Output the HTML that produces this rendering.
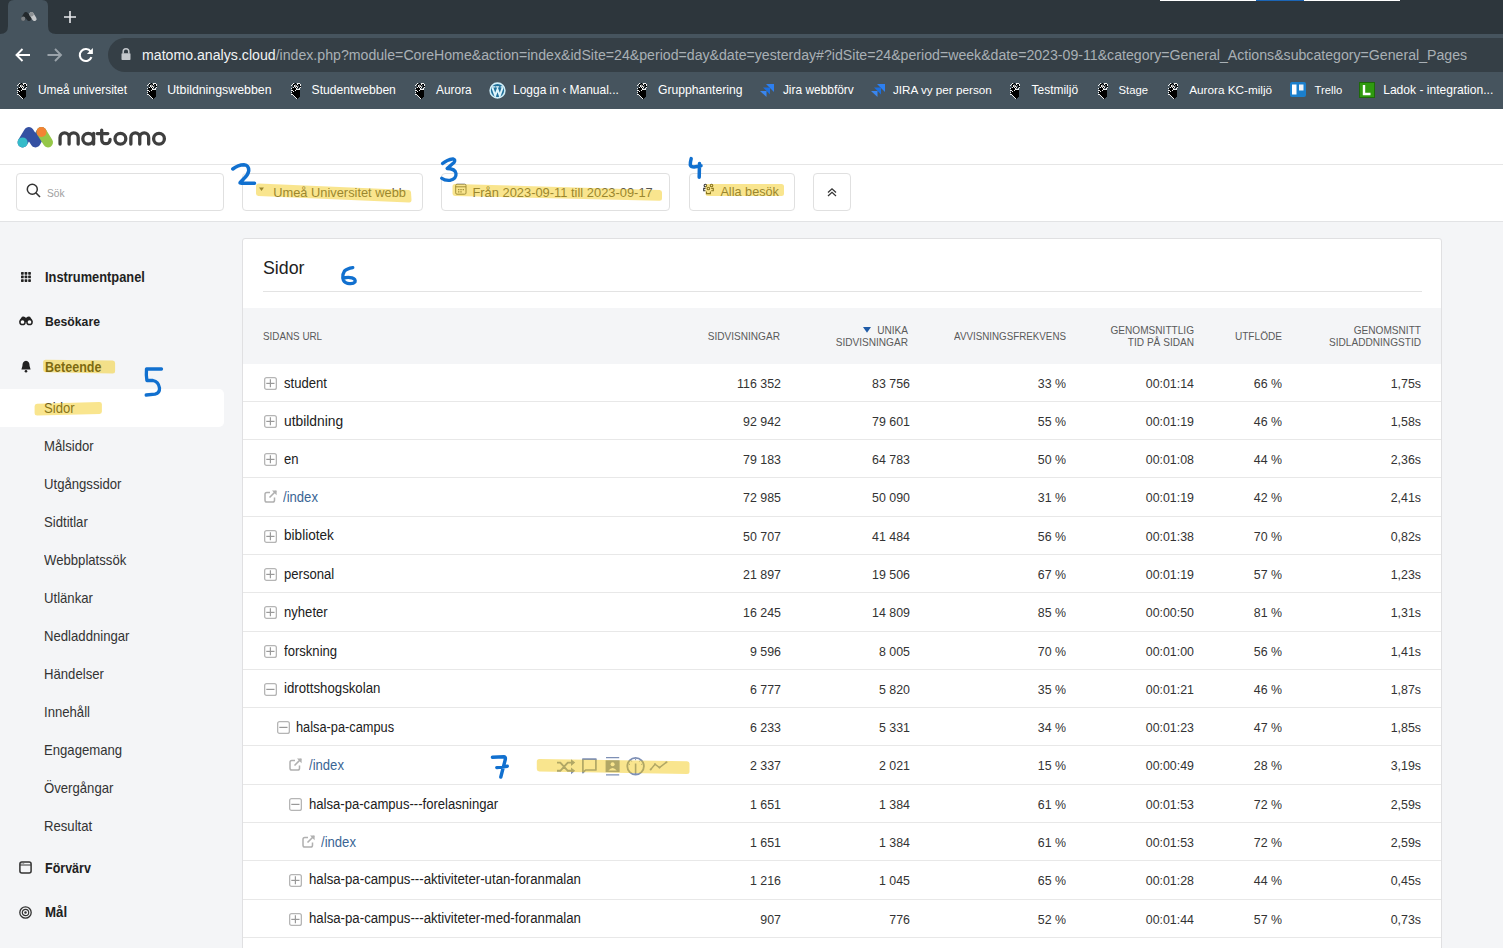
<!DOCTYPE html><html><head><meta charset="utf-8"><style>
html,body{margin:0;padding:0;width:1503px;height:948px;overflow:hidden;background:#f4f5f7;}
body{position:relative;font-family:"Liberation Sans",sans-serif;}
.t{position:absolute;white-space:nowrap;}
.r{position:absolute;}
svg{position:absolute;overflow:visible;}
</style></head><body>

<div class="r" style="left:0px;top:0px;width:1503px;height:34px;background:#2d363c;"></div>
<div class="r" style="left:0px;top:34px;width:1503px;height:75px;background:#46545e;"></div>
<svg style="left:0;top:0" width="60" height="34"><path d="M0 34 Q8 34 8 26 L8 6 Q8 0 14 0 L42 0 Q48 0 48 6 L48 26 Q48 34 56 34 Z" fill="#46545e"/></svg>
<svg style="left:0;top:0" width="60" height="30"><path d="M23.2 18.8 L25.9 14.2 L28.9 18.8 L31.5 14.2" stroke="#23292d" stroke-width="4.4" fill="none" stroke-linecap="round" stroke-linejoin="round"/><path d="M31.5 14.2 L34.4 18.8" stroke="#c6c9cb" stroke-width="4.4" stroke-linecap="round"/><circle cx="23.2" cy="18.8" r="2.2" fill="#7b8084"/><circle cx="31.5" cy="14.2" r="2.2" fill="#8d9295"/></svg>
<svg style="left:63px;top:10px" width="14" height="14"><path d="M7 1 V13 M1 7 H13" stroke="#e8eaed" stroke-width="1.6"/></svg>
<div class="r" style="left:1160px;top:0px;width:240px;height:1px;background:#ffffff;"></div>
<div class="r" style="left:1256px;top:0px;width:48px;height:1px;background:#1b65b5;"></div>
<svg style="left:14px;top:47px" width="18" height="16"><path d="M16 8 H2.5 M8.5 2 L2.5 8 L8.5 14" stroke="#ffffff" stroke-width="1.9" fill="none"/></svg>
<svg style="left:46px;top:47px" width="18" height="16"><path d="M1.5 8 H15 M9 2 L15 8 L9 14" stroke="#9aa3aa" stroke-width="1.9" fill="none"/></svg>
<svg style="left:0;top:0" width="110" height="80"><path d="M90.7 51.56 A6 6 0 1 0 91.44 57.05" stroke="#ffffff" stroke-width="2.1" fill="none"/><path d="M92.9 48 L92.9 54 L86.9 54 Z" fill="#ffffff"/></svg>
<div class="r" style="left:108px;top:38px;width:1420px;height:34px;background:#353f46;border-radius:17px;"></div>
<svg style="left:121px;top:48px" width="10" height="13"><path d="M2.2 5.5 V3.6 A2.8 2.8 0 0 1 7.8 3.6 V5.5" stroke="#c4c8cc" stroke-width="1.5" fill="none"/><rect x="0.5" y="5.3" width="9" height="6.8" rx="0.8" fill="#c4c8cc"/></svg>
<div class="t " style="top:46.81px;font-size:14.15px;line-height:16.98px;color:#f1f3f4;left:142px;">matomo.analys.cloud<span style="color:#a9b0b5">/index.php?module=CoreHome&amp;action=index&amp;idSite=24&amp;period=day&amp;date=yesterday#?idSite=24&amp;period=week&amp;date=2023-09-11&amp;category=General_Actions&amp;subcategory=General_Pages</span></div>
<svg width="0" height="0" style="position:absolute"><defs><symbol id="umu" viewBox="0 0 11 16"><rect x="2" y="0" width="1" height="1" fill="#f0f0f0"/><rect x="4" y="0" width="1" height="1" fill="#000"/><rect x="6" y="0" width="1" height="1" fill="#f0f0f0"/><rect x="7" y="0" width="1" height="1" fill="#f0f0f0"/><rect x="8" y="0" width="1" height="1" fill="#f0f0f0"/><rect x="1" y="1" width="1" height="1" fill="#f0f0f0"/><rect x="2" y="1" width="1" height="1" fill="#000"/><rect x="3" y="1" width="1" height="1" fill="#000"/><rect x="5" y="1" width="1" height="1" fill="#000"/><rect x="6" y="1" width="1" height="1" fill="#f0f0f0"/><rect x="7" y="1" width="1" height="1" fill="#000"/><rect x="8" y="1" width="1" height="1" fill="#000"/><rect x="9" y="1" width="1" height="1" fill="#f0f0f0"/><rect x="0" y="2" width="1" height="1" fill="#f0f0f0"/><rect x="2" y="2" width="1" height="1" fill="#000"/><rect x="3" y="2" width="1" height="1" fill="#f0f0f0"/><rect x="4" y="2" width="1" height="1" fill="#8c8c8c"/><rect x="5" y="2" width="1" height="1" fill="#8c8c8c"/><rect x="6" y="2" width="1" height="1" fill="#000"/><rect x="8" y="2" width="1" height="1" fill="#000"/><rect x="9" y="2" width="1" height="1" fill="#f0f0f0"/><rect x="2" y="3" width="1" height="1" fill="#000"/><rect x="3" y="3" width="1" height="1" fill="#f0f0f0"/><rect x="4" y="3" width="1" height="1" fill="#8c8c8c"/><rect x="5" y="3" width="1" height="1" fill="#f0f0f0"/><rect x="6" y="3" width="1" height="1" fill="#8c8c8c"/><rect x="8" y="3" width="1" height="1" fill="#000"/><rect x="9" y="3" width="1" height="1" fill="#000"/><rect x="2" y="4" width="1" height="1" fill="#f0f0f0"/><rect x="3" y="4" width="1" height="1" fill="#000"/><rect x="4" y="4" width="1" height="1" fill="#f0f0f0"/><rect x="5" y="4" width="1" height="1" fill="#000"/><rect x="6" y="4" width="1" height="1" fill="#f0f0f0"/><rect x="7" y="4" width="1" height="1" fill="#000"/><rect x="9" y="4" width="1" height="1" fill="#f0f0f0"/><rect x="0" y="5" width="1" height="1" fill="#f0f0f0"/><rect x="1" y="5" width="1" height="1" fill="#000"/><rect x="2" y="5" width="1" height="1" fill="#000"/><rect x="3" y="5" width="1" height="1" fill="#000"/><rect x="4" y="5" width="1" height="1" fill="#000"/><rect x="5" y="5" width="1" height="1" fill="#f0f0f0"/><rect x="8" y="5" width="1" height="1" fill="#f0f0f0"/><rect x="1" y="6" width="1" height="1" fill="#000"/><rect x="2" y="6" width="1" height="1" fill="#000"/><rect x="3" y="6" width="1" height="1" fill="#000"/><rect x="4" y="6" width="1" height="1" fill="#000"/><rect x="5" y="6" width="1" height="1" fill="#f0f0f0"/><rect x="6" y="6" width="1" height="1" fill="#f0f0f0"/><rect x="7" y="6" width="1" height="1" fill="#f0f0f0"/><rect x="8" y="6" width="1" height="1" fill="#f0f0f0"/><rect x="0" y="7" width="1" height="1" fill="#f0f0f0"/><rect x="1" y="7" width="1" height="1" fill="#f0f0f0"/><rect x="2" y="7" width="1" height="1" fill="#000"/><rect x="3" y="7" width="1" height="1" fill="#000"/><rect x="4" y="7" width="1" height="1" fill="#f0f0f0"/><rect x="5" y="7" width="1" height="1" fill="#000"/><rect x="6" y="7" width="1" height="1" fill="#000"/><rect x="7" y="7" width="1" height="1" fill="#000"/><rect x="8" y="7" width="1" height="1" fill="#000"/><rect x="1" y="8" width="1" height="1" fill="#000"/><rect x="2" y="8" width="1" height="1" fill="#f0f0f0"/><rect x="3" y="8" width="1" height="1" fill="#000"/><rect x="4" y="8" width="1" height="1" fill="#000"/><rect x="5" y="8" width="1" height="1" fill="#000"/><rect x="6" y="8" width="1" height="1" fill="#000"/><rect x="7" y="8" width="1" height="1" fill="#000"/><rect x="8" y="8" width="1" height="1" fill="#000"/><rect x="0" y="9" width="1" height="1" fill="#f0f0f0"/><rect x="1" y="9" width="1" height="1" fill="#000"/><rect x="2" y="9" width="1" height="1" fill="#000"/><rect x="3" y="9" width="1" height="1" fill="#000"/><rect x="4" y="9" width="1" height="1" fill="#000"/><rect x="5" y="9" width="1" height="1" fill="#000"/><rect x="6" y="9" width="1" height="1" fill="#000"/><rect x="7" y="9" width="1" height="1" fill="#000"/><rect x="8" y="9" width="1" height="1" fill="#000"/><rect x="1" y="10" width="1" height="1" fill="#000"/><rect x="2" y="10" width="1" height="1" fill="#000"/><rect x="3" y="10" width="1" height="1" fill="#000"/><rect x="4" y="10" width="1" height="1" fill="#000"/><rect x="5" y="10" width="1" height="1" fill="#000"/><rect x="6" y="10" width="1" height="1" fill="#000"/><rect x="7" y="10" width="1" height="1" fill="#000"/><rect x="8" y="10" width="1" height="1" fill="#000"/><rect x="0" y="11" width="1" height="1" fill="#f0f0f0"/><rect x="1" y="11" width="1" height="1" fill="#f0f0f0"/><rect x="2" y="11" width="1" height="1" fill="#000"/><rect x="3" y="11" width="1" height="1" fill="#000"/><rect x="4" y="11" width="1" height="1" fill="#000"/><rect x="5" y="11" width="1" height="1" fill="#000"/><rect x="6" y="11" width="1" height="1" fill="#000"/><rect x="7" y="11" width="1" height="1" fill="#000"/><rect x="8" y="11" width="1" height="1" fill="#000"/><rect x="2" y="12" width="1" height="1" fill="#f0f0f0"/><rect x="3" y="12" width="1" height="1" fill="#000"/><rect x="4" y="12" width="1" height="1" fill="#000"/><rect x="5" y="12" width="1" height="1" fill="#000"/><rect x="6" y="12" width="1" height="1" fill="#000"/><rect x="7" y="12" width="1" height="1" fill="#000"/><rect x="8" y="12" width="1" height="1" fill="#000"/><rect x="3" y="13" width="1" height="1" fill="#f0f0f0"/><rect x="4" y="13" width="1" height="1" fill="#000"/><rect x="5" y="13" width="1" height="1" fill="#000"/><rect x="6" y="13" width="1" height="1" fill="#000"/><rect x="7" y="13" width="1" height="1" fill="#000"/><rect x="8" y="13" width="1" height="1" fill="#000"/><rect x="4" y="14" width="1" height="1" fill="#f0f0f0"/><rect x="5" y="14" width="1" height="1" fill="#000"/><rect x="6" y="14" width="1" height="1" fill="#000"/><rect x="7" y="14" width="1" height="1" fill="#000"/><rect x="5" y="15" width="1" height="1" fill="#f0f0f0"/><rect x="6" y="15" width="1" height="1" fill="#000"/></symbol></defs></svg>
<svg style="left:17px;top:83px" width="11" height="16" shape-rendering="crispEdges"><use href="#umu"/></svg>
<div class="t " style="top:82.97px;font-size:11.87px;line-height:14.24px;color:#ffffff;left:38.0px;">Umeå universitet</div>
<svg style="left:147px;top:83px" width="11" height="16" shape-rendering="crispEdges"><use href="#umu"/></svg>
<div class="t " style="top:82.51px;font-size:12.35px;line-height:14.82px;color:#ffffff;left:167.2px;">Utbildningswebben</div>
<svg style="left:291px;top:83px" width="11" height="16" shape-rendering="crispEdges"><use href="#umu"/></svg>
<div class="t " style="top:82.71px;font-size:12.14px;line-height:14.57px;color:#ffffff;left:311.6px;">Studentwebben</div>
<svg style="left:415px;top:83px" width="11" height="16" shape-rendering="crispEdges"><use href="#umu"/></svg>
<div class="t " style="top:82.97px;font-size:11.87px;line-height:14.24px;color:#ffffff;left:436.1px;">Aurora</div>
<svg style="left:489px;top:81.8px" width="17" height="17" viewBox="0 0 17 17"><circle cx="8.5" cy="8.5" r="7.4" fill="#1f6f99" stroke="#cfeef9" stroke-width="1.6"/><path d="M3.3 5.4 L6.2 13.6 L8.5 7.3 L10.8 13.6 L13.7 5.4" stroke="#dff5fc" stroke-width="1.9" fill="none"/><path d="M2.6 4.9 H6.3 M6.8 4.9 H10.2 M11.6 4.9 H14.4" stroke="#dff5fc" stroke-width="1.1"/></svg>
<div class="t " style="top:82.86px;font-size:11.98px;line-height:14.38px;color:#ffffff;left:513.0px;">Logga in ‹ Manual...</div>
<svg style="left:637px;top:83px" width="11" height="16" shape-rendering="crispEdges"><use href="#umu"/></svg>
<div class="t " style="top:82.70px;font-size:12.15px;line-height:14.58px;color:#ffffff;left:658.1px;">Grupphantering</div>
<svg style="left:759px;top:82px" width="16" height="16" viewBox="0 0 16 16"><path d="M7 2 H15 V10 Z" fill="#2d7ff0"/><path d="M4 5.5 L11 5.5 L11 12.5 Z" fill="#1c6fe0"/><path d="M1 9 L7.5 9 L7.5 15 Z" fill="#3a86ee"/></svg>
<div class="t " style="top:82.91px;font-size:11.93px;line-height:14.32px;color:#ffffff;left:782.9px;">Jira webbförv</div>
<svg style="left:870px;top:82px" width="16" height="16" viewBox="0 0 16 16"><path d="M7 2 H15 V10 Z" fill="#2d7ff0"/><path d="M4 5.5 L11 5.5 L11 12.5 Z" fill="#1c6fe0"/><path d="M1 9 L7.5 9 L7.5 15 Z" fill="#3a86ee"/></svg>
<div class="t " style="top:83.13px;font-size:11.69px;line-height:14.03px;color:#ffffff;left:893.0px;">JIRA vy per person</div>
<svg style="left:1010px;top:83px" width="11" height="16" shape-rendering="crispEdges"><use href="#umu"/></svg>
<div class="t " style="top:82.85px;font-size:11.99px;line-height:14.39px;color:#ffffff;left:1031.5px;">Testmiljö</div>
<svg style="left:1098px;top:83px" width="11" height="16" shape-rendering="crispEdges"><use href="#umu"/></svg>
<div class="t " style="top:83.50px;font-size:11.30px;line-height:13.56px;color:#ffffff;left:1118.5px;">Stage</div>
<svg style="left:1168px;top:83px" width="11" height="16" shape-rendering="crispEdges"><use href="#umu"/></svg>
<div class="t " style="top:83.07px;font-size:11.76px;line-height:14.11px;color:#ffffff;left:1189.2px;">Aurora KC-miljö</div>
<svg style="left:1290px;top:82px" width="16" height="15" viewBox="0 0 16 15"><rect x="0" y="0" width="16" height="15" rx="2" fill="#1b7fcc"/><rect x="2" y="2.5" width="4.5" height="10" fill="#fff"/><rect x="9" y="2.5" width="4.5" height="6" fill="#f0f4f8"/></svg>
<div class="t " style="top:83.52px;font-size:11.28px;line-height:13.54px;color:#ffffff;left:1314.5px;">Trello</div>
<svg style="left:1359px;top:82px" width="16" height="16" viewBox="0 0 16 16"><rect x="0.5" y="0.5" width="15" height="15" fill="#2f9a10" stroke="#1d6a0a"/><path d="M5 3 V12 H11.5" stroke="#fff" stroke-width="2.4" fill="none"/></svg>
<div class="t " style="top:82.76px;font-size:12.09px;line-height:14.51px;color:#ffffff;left:1383.2px;">Ladok - integration...</div>
<div class="r" style="left:0px;top:109px;width:1503px;height:56px;background:#ffffff;"></div>
<div class="r" style="left:0px;top:164px;width:1503px;height:1px;background:#e6e6e6;"></div>
<div class="r" style="left:0px;top:165px;width:1503px;height:56px;background:#ffffff;"></div>
<div class="r" style="left:0px;top:221px;width:1503px;height:1px;background:#e2e3e5;"></div>
<svg style="left:0;top:0" width="200" height="160"><path d="M22.6 142.4 L28.8 132 L35.6 142.4 L41.5 132" stroke="#3450a2" stroke-width="10" fill="none" stroke-linecap="round" stroke-linejoin="round"/><path d="M41.5 132 L48 142.4" stroke="#95c748" stroke-width="10" stroke-linecap="round"/><circle cx="22.6" cy="142.4" r="5" fill="#35bbc9"/><circle cx="41.5" cy="132" r="5" fill="#f38334"/><g stroke="#3f3f3f" stroke-width="3.3" fill="none" stroke-linecap="round"><path d="M60.05 144 V137.4 A4.5 4.5 0 0 1 69.1 137.4 V144 M69.1 137.4 A4.55 4.55 0 0 1 78.2 137.4 V144"/><circle cx="88.2" cy="138.8" r="5.4"/><path d="M93.6 133.5 V144"/><path d="M101.7 130.2 V139.5 A4.2 4.2 0 0 0 110.1 139.5 M97.2 133.6 H107.8"/><circle cx="120.4" cy="138.8" r="5.4"/><path d="M130.85 144 V137.4 A4.45 4.45 0 0 1 139.75 137.4 V144 M139.75 137.4 A4.45 4.45 0 0 1 148.65 137.4 V144"/><circle cx="159" cy="138.8" r="5.4"/></g></svg>
<div class="r" style="left:16px;top:173px;width:208px;height:38px;background:#fff;box-sizing:border-box;border:1px solid #e0e0e0;border-radius:4px;"></div>
<div class="r" style="left:242px;top:173px;width:181px;height:38px;background:#fff;box-sizing:border-box;border:1px solid #e0e0e0;border-radius:4px;"></div>
<div class="r" style="left:441px;top:173px;width:229px;height:38px;background:#fff;box-sizing:border-box;border:1px solid #e0e0e0;border-radius:4px;"></div>
<div class="r" style="left:689px;top:173px;width:106px;height:38px;background:#fff;box-sizing:border-box;border:1px solid #e0e0e0;border-radius:4px;"></div>
<div class="r" style="left:813px;top:173px;width:38px;height:38px;background:#fff;box-sizing:border-box;border:1px solid #e0e0e0;border-radius:4px;"></div>
<svg style="left:26px;top:183px" width="16" height="16"><circle cx="6.3" cy="6.3" r="5" stroke="#333" stroke-width="1.5" fill="none"/><path d="M9.8 9.8 L14 14" stroke="#333" stroke-width="1.6"/></svg>
<div class="t " style="top:187.37px;font-size:11.02px;line-height:13.22px;color:#9e9e9e;left:47.4px;transform:scaleX(0.9259);transform-origin:0 0;">Sök</div>
<svg style="left:259px;top:187px" width="6" height="5"><path d="M0 0.5 H5 L2.5 4 Z" fill="#555"/></svg>
<div class="t " style="top:184.64px;font-size:12.85px;line-height:15.42px;color:#555;left:273.2px;">Umeå Universitet webb</div>
<svg style="left:455px;top:183px" width="12" height="12" viewBox="0 0 12 12"><rect x="0.7" y="1.2" width="10.3" height="10" rx="1.3" stroke="#666" stroke-width="1" fill="none"/><path d="M0.7 3.8 H11" stroke="#666" stroke-width="1"/><path d="M3 6h1.4v1.2H3z M5.3 6h1.4v1.2H5.3z M7.6 6h1.4v1.2H7.6z M3 8.3h1.4v1.2H3z M5.3 8.3h1.4v1.2H5.3z" fill="#666"/></svg>
<div class="t " style="top:184.79px;font-size:12.90px;line-height:15.48px;color:#555;left:472.4px;">Från 2023-09-11 till 2023-09-17</div>
<svg style="left:0;top:0" width="800" height="220"><g stroke="#3a3a3a" stroke-width="1.1" fill="none"><circle cx="705.4" cy="185.5" r="1.3"/><circle cx="711.5" cy="185.5" r="1.3"/><circle cx="708.4" cy="188.5" r="1.3"/><path d="M705.6 188.4 H703.7 V190.7 H705.6 M711.2 188.4 H713.3 V190.7 H711.2 M706.5 191.6 V193.6 H710.4 V191.6"/></g></svg>
<div class="t " style="top:184.68px;font-size:12.70px;line-height:15.24px;color:#555;left:720.4px;">Alla besök</div>
<svg style="left:826px;top:187px" width="12" height="10" viewBox="0 0 12 10"><path d="M2 5.5 L6 1.8 L10 5.5 M2 9 L6 5.3 L10 9" stroke="#333" stroke-width="1.25" fill="none"/></svg>
<div class="r" style="left:0px;top:389px;width:224px;height:38px;background:#ffffff;border-radius:0 5px 5px 0;"></div>
<div class="t " style="top:268.98px;font-size:14.39px;line-height:17.27px;color:#212121;font-weight:700;left:44.9px;transform:scaleX(0.8929);transform-origin:0 0;">Instrumentpanel</div>
<div class="t " style="top:314.27px;font-size:13.66px;line-height:16.4px;color:#212121;font-weight:700;left:44.9px;transform:scaleX(0.8929);transform-origin:0 0;">Besökare</div>
<div class="t " style="top:358.89px;font-size:14.06px;line-height:16.87px;color:#212121;font-weight:700;left:44.9px;transform:scaleX(0.8929);transform-origin:0 0;">Beteende</div>
<div class="t " style="top:860.05px;font-size:14.00px;line-height:16.8px;color:#212121;font-weight:700;left:45.1px;transform:scaleX(0.8929);transform-origin:0 0;">Förvärv</div>
<div class="t " style="top:904.00px;font-size:14.90px;line-height:17.88px;color:#212121;font-weight:700;left:45.1px;transform:scaleX(0.8929);transform-origin:0 0;">Mål</div>
<div class="t " style="top:399.56px;font-size:14.20px;line-height:17.04px;color:#333;left:44.4px;transform:scaleX(0.9259);transform-origin:0 0;">Sidor</div>
<div class="t " style="top:437.56px;font-size:14.20px;line-height:17.04px;color:#333;left:44.4px;transform:scaleX(0.9259);transform-origin:0 0;">Målsidor</div>
<div class="t " style="top:475.56px;font-size:14.20px;line-height:17.04px;color:#333;left:44.4px;transform:scaleX(0.9259);transform-origin:0 0;">Utgångssidor</div>
<div class="t " style="top:513.56px;font-size:14.20px;line-height:17.04px;color:#333;left:44.4px;transform:scaleX(0.9259);transform-origin:0 0;">Sidtitlar</div>
<div class="t " style="top:551.56px;font-size:14.20px;line-height:17.04px;color:#333;left:44.4px;transform:scaleX(0.9259);transform-origin:0 0;">Webbplatssök</div>
<div class="t " style="top:589.56px;font-size:14.20px;line-height:17.04px;color:#333;left:44.4px;transform:scaleX(0.9259);transform-origin:0 0;">Utlänkar</div>
<div class="t " style="top:627.56px;font-size:14.20px;line-height:17.04px;color:#333;left:44.4px;transform:scaleX(0.9259);transform-origin:0 0;">Nedladdningar</div>
<div class="t " style="top:665.56px;font-size:14.20px;line-height:17.04px;color:#333;left:44.4px;transform:scaleX(0.9259);transform-origin:0 0;">Händelser</div>
<div class="t " style="top:703.56px;font-size:14.20px;line-height:17.04px;color:#333;left:44.4px;transform:scaleX(0.9259);transform-origin:0 0;">Innehåll</div>
<div class="t " style="top:741.56px;font-size:14.20px;line-height:17.04px;color:#333;left:44.4px;transform:scaleX(0.9259);transform-origin:0 0;">Engagemang</div>
<div class="t " style="top:779.56px;font-size:14.20px;line-height:17.04px;color:#333;left:44.4px;transform:scaleX(0.9259);transform-origin:0 0;">Övergångar</div>
<div class="t " style="top:817.56px;font-size:14.20px;line-height:17.04px;color:#333;left:44.4px;transform:scaleX(0.9259);transform-origin:0 0;">Resultat</div>
<svg style="left:20.6px;top:271.5px" width="10" height="10" viewBox="0 0 10 10"><g fill="#222"><rect x="0" y="0" width="2.7" height="2.7" rx="0.6"/><rect x="3.6" y="0" width="2.7" height="2.7" rx="0.6"/><rect x="7.2" y="0" width="2.7" height="2.7" rx="0.6"/><rect x="0" y="3.6" width="2.7" height="2.7" rx="0.6"/><rect x="3.6" y="3.6" width="2.7" height="2.7" rx="0.6"/><rect x="7.2" y="3.6" width="2.7" height="2.7" rx="0.6"/><rect x="0" y="7.2" width="2.7" height="2.7" rx="0.6"/><rect x="3.6" y="7.2" width="2.7" height="2.7" rx="0.6"/><rect x="7.2" y="7.2" width="2.7" height="2.7" rx="0.6"/></g></svg>
<svg style="left:18.8px;top:316.4px" width="14" height="10" viewBox="0 0 14 10"><path d="M0.6 6 Q1.2 2.5 3 0.8 Q4.5 0 6 1 L7 2 L8 1 Q9.5 0 11 0.8 Q12.8 2.5 13.4 6 Z" fill="#222"/><circle cx="3.5" cy="6" r="2.6" fill="#fff" stroke="#222" stroke-width="1.5"/><circle cx="10.5" cy="6" r="2.6" fill="#fff" stroke="#222" stroke-width="1.5"/></svg>
<svg style="left:21px;top:360px" width="10" height="13" viewBox="0 0 10 13"><path d="M5 0.8 Q8.6 1.2 8.6 6 L9.6 9.5 H0.4 L1.4 6 Q1.4 1.2 5 0.8Z" fill="#222"/><circle cx="5" cy="11.3" r="1.3" fill="#222"/></svg>
<svg style="left:19px;top:861px" width="13" height="13" viewBox="0 0 13 13"><rect x="0.9" y="0.9" width="11.2" height="11.2" rx="2" stroke="#333" stroke-width="1.5" fill="none"/><path d="M1 4 H12" stroke="#333" stroke-width="1"/><path d="M2.5 2.2h1v0.8h-1z M4.2 2.2h1v0.8h-1z" fill="#666"/></svg>
<svg style="left:19px;top:906px" width="13" height="13" viewBox="0 0 13 13"><circle cx="6.5" cy="6.5" r="5.7" stroke="#333" stroke-width="1.3" fill="none"/><circle cx="6.5" cy="6.5" r="3.2" stroke="#333" stroke-width="1.2" fill="none"/><circle cx="6.5" cy="6.5" r="1.2" fill="#333"/></svg>
<div class="r" style="left:242px;top:238px;width:1200px;height:720px;background:#fff;box-sizing:border-box;border:1px solid #e0e0e2;border-radius:3px;"></div>
<div class="t " style="top:256.78px;font-size:18.51px;line-height:22.21px;color:#212121;left:262.7px;transform:scaleX(0.9615);transform-origin:0 0;">Sidor</div>
<div class="r" style="left:263px;top:291px;width:1159px;height:1px;background:#e3e3e3;"></div>
<div class="r" style="left:243px;top:308px;width:1198px;height:56px;background:#f4f5f7;"></div>
<div class="t " style="top:329.84px;font-size:10.74px;line-height:12.88px;color:#5a5a5a;left:263px;transform:scaleX(0.9174);transform-origin:0 0;">SIDANS URL</div>
<div class="t " style="top:329.58px;font-size:11.01px;line-height:13.21px;color:#5a5a5a;left:180.20000000000005px;width:600px;text-align:right;transform:scaleX(0.9174);transform-origin:100% 0;">SIDVISNINGAR</div>
<div class="t " style="top:323.58px;font-size:11.01px;line-height:13.21px;color:#5a5a5a;left:308px;width:600px;text-align:right;transform:scaleX(0.9174);transform-origin:100% 0;">UNIKA</div>
<div class="t " style="top:335.58px;font-size:11.01px;line-height:13.21px;color:#5a5a5a;left:308px;width:600px;text-align:right;transform:scaleX(0.9174);transform-origin:100% 0;">SIDVISNINGAR</div>
<svg style="left:863px;top:326.5px" width="9" height="6"><path d="M0 0 H8 L4 5.8 Z" fill="#1f5ba8"/></svg>
<div class="t " style="top:329.89px;font-size:10.68px;line-height:12.82px;color:#5a5a5a;left:466px;width:600px;text-align:right;transform:scaleX(0.9174);transform-origin:100% 0;">AVVISNINGSFREKVENS</div>
<div class="t " style="top:323.58px;font-size:11.01px;line-height:13.21px;color:#5a5a5a;left:594px;width:600px;text-align:right;transform:scaleX(0.9174);transform-origin:100% 0;">GENOMSNITTLIG</div>
<div class="t " style="top:335.58px;font-size:11.01px;line-height:13.21px;color:#5a5a5a;left:594px;width:600px;text-align:right;transform:scaleX(0.9174);transform-origin:100% 0;">TID PÅ SIDAN</div>
<div class="t " style="top:329.58px;font-size:11.01px;line-height:13.21px;color:#5a5a5a;left:682.2px;width:600px;text-align:right;transform:scaleX(0.9174);transform-origin:100% 0;">UTFLÖDE</div>
<div class="t " style="top:323.58px;font-size:11.01px;line-height:13.21px;color:#5a5a5a;left:820.5999999999999px;width:600px;text-align:right;transform:scaleX(0.9174);transform-origin:100% 0;">GENOMSNITT</div>
<div class="t " style="top:335.58px;font-size:11.01px;line-height:13.21px;color:#5a5a5a;left:820.5999999999999px;width:600px;text-align:right;transform:scaleX(0.9174);transform-origin:100% 0;">SIDLADDNINGSTID</div>
<div class="r" style="left:243px;top:401px;width:1198px;height:1px;background:#e8e8e8;"></div>
<svg style="left:264.0px;top:376.90px" width="13" height="13" viewBox="0 0 12 12"><rect x="0.6" y="0.6" width="10.8" height="10.8" rx="1.8" stroke="#b5b5b5" stroke-width="1.2" fill="none"/><path d="M2.1 5.9 H9.7" stroke="#999" stroke-width="1.1"/><path d="M5.9 2.1 V9.5" stroke="#999" stroke-width="1.1"/></svg>
<div class="t " style="top:374.51px;font-size:14.15px;line-height:16.98px;color:#212121;left:283.8px;transform:scaleX(0.9259);transform-origin:0 0;">student</div>
<div class="t " style="top:375.71px;font-size:12.77px;line-height:15.33px;color:#333;left:181.20000000000005px;width:600px;text-align:right;transform:scaleX(0.9709);transform-origin:100% 0;">116 352</div>
<div class="t " style="top:375.71px;font-size:12.77px;line-height:15.33px;color:#333;left:309.6px;width:600px;text-align:right;transform:scaleX(0.9709);transform-origin:100% 0;">83 756</div>
<div class="t " style="top:375.71px;font-size:12.77px;line-height:15.33px;color:#333;left:465.79999999999995px;width:600px;text-align:right;transform:scaleX(0.9709);transform-origin:100% 0;">33 %</div>
<div class="t " style="top:375.71px;font-size:12.77px;line-height:15.33px;color:#333;left:594px;width:600px;text-align:right;transform:scaleX(0.9709);transform-origin:100% 0;">00:01:14</div>
<div class="t " style="top:375.71px;font-size:12.77px;line-height:15.33px;color:#333;left:682.2px;width:600px;text-align:right;transform:scaleX(0.9709);transform-origin:100% 0;">66 %</div>
<div class="t " style="top:375.71px;font-size:12.77px;line-height:15.33px;color:#333;left:820.5999999999999px;width:600px;text-align:right;transform:scaleX(0.9709);transform-origin:100% 0;">1,75s</div>
<div class="r" style="left:243px;top:439px;width:1198px;height:1px;background:#e8e8e8;"></div>
<svg style="left:264.0px;top:414.90px" width="13" height="13" viewBox="0 0 12 12"><rect x="0.6" y="0.6" width="10.8" height="10.8" rx="1.8" stroke="#b5b5b5" stroke-width="1.2" fill="none"/><path d="M2.1 5.9 H9.7" stroke="#999" stroke-width="1.1"/><path d="M5.9 2.1 V9.5" stroke="#999" stroke-width="1.1"/></svg>
<div class="t " style="top:411.76px;font-size:14.94px;line-height:17.92px;color:#212121;left:283.8px;transform:scaleX(0.9259);transform-origin:0 0;">utbildning</div>
<div class="t " style="top:413.71px;font-size:12.77px;line-height:15.33px;color:#333;left:181.20000000000005px;width:600px;text-align:right;transform:scaleX(0.9709);transform-origin:100% 0;">92 942</div>
<div class="t " style="top:413.71px;font-size:12.77px;line-height:15.33px;color:#333;left:309.6px;width:600px;text-align:right;transform:scaleX(0.9709);transform-origin:100% 0;">79 601</div>
<div class="t " style="top:413.71px;font-size:12.77px;line-height:15.33px;color:#333;left:465.79999999999995px;width:600px;text-align:right;transform:scaleX(0.9709);transform-origin:100% 0;">55 %</div>
<div class="t " style="top:413.71px;font-size:12.77px;line-height:15.33px;color:#333;left:594px;width:600px;text-align:right;transform:scaleX(0.9709);transform-origin:100% 0;">00:01:19</div>
<div class="t " style="top:413.71px;font-size:12.77px;line-height:15.33px;color:#333;left:682.2px;width:600px;text-align:right;transform:scaleX(0.9709);transform-origin:100% 0;">46 %</div>
<div class="t " style="top:413.71px;font-size:12.77px;line-height:15.33px;color:#333;left:820.5999999999999px;width:600px;text-align:right;transform:scaleX(0.9709);transform-origin:100% 0;">1,58s</div>
<div class="r" style="left:243px;top:477px;width:1198px;height:1px;background:#e8e8e8;"></div>
<svg style="left:264.0px;top:452.90px" width="13" height="13" viewBox="0 0 12 12"><rect x="0.6" y="0.6" width="10.8" height="10.8" rx="1.8" stroke="#b5b5b5" stroke-width="1.2" fill="none"/><path d="M2.1 5.9 H9.7" stroke="#999" stroke-width="1.1"/><path d="M5.9 2.1 V9.5" stroke="#999" stroke-width="1.1"/></svg>
<div class="t " style="top:450.51px;font-size:14.15px;line-height:16.98px;color:#212121;left:283.8px;transform:scaleX(0.9259);transform-origin:0 0;">en</div>
<div class="t " style="top:451.71px;font-size:12.77px;line-height:15.33px;color:#333;left:181.20000000000005px;width:600px;text-align:right;transform:scaleX(0.9709);transform-origin:100% 0;">79 183</div>
<div class="t " style="top:451.71px;font-size:12.77px;line-height:15.33px;color:#333;left:309.6px;width:600px;text-align:right;transform:scaleX(0.9709);transform-origin:100% 0;">64 783</div>
<div class="t " style="top:451.71px;font-size:12.77px;line-height:15.33px;color:#333;left:465.79999999999995px;width:600px;text-align:right;transform:scaleX(0.9709);transform-origin:100% 0;">50 %</div>
<div class="t " style="top:451.71px;font-size:12.77px;line-height:15.33px;color:#333;left:594px;width:600px;text-align:right;transform:scaleX(0.9709);transform-origin:100% 0;">00:01:08</div>
<div class="t " style="top:451.71px;font-size:12.77px;line-height:15.33px;color:#333;left:682.2px;width:600px;text-align:right;transform:scaleX(0.9709);transform-origin:100% 0;">44 %</div>
<div class="t " style="top:451.71px;font-size:12.77px;line-height:15.33px;color:#333;left:820.5999999999999px;width:600px;text-align:right;transform:scaleX(0.9709);transform-origin:100% 0;">2,36s</div>
<div class="r" style="left:243px;top:516px;width:1198px;height:1px;background:#e8e8e8;"></div>
<svg style="left:264px;top:490.10px" width="14" height="13" viewBox="0 0 14 13"><path d="M6 2.5 H2.8 Q1 2.5 1 4.3 V10.2 Q1 12 2.8 12 H8.7 Q10.5 12 10.5 10.2 V7.5" stroke="#b0b0b0" stroke-width="1.5" fill="none"/><path d="M5.5 7.5 L12 1" stroke="#b0b0b0" stroke-width="1.6"/><path d="M8 0.6 H12.6 V5.2 Z" fill="#b0b0b0"/></svg>
<div class="t " style="top:488.51px;font-size:14.15px;line-height:16.98px;color:#3a6594;left:283.2px;transform:scaleX(0.9259);transform-origin:0 0;">/index</div>
<div class="t " style="top:489.71px;font-size:12.77px;line-height:15.33px;color:#333;left:181.20000000000005px;width:600px;text-align:right;transform:scaleX(0.9709);transform-origin:100% 0;">72 985</div>
<div class="t " style="top:489.71px;font-size:12.77px;line-height:15.33px;color:#333;left:309.6px;width:600px;text-align:right;transform:scaleX(0.9709);transform-origin:100% 0;">50 090</div>
<div class="t " style="top:489.71px;font-size:12.77px;line-height:15.33px;color:#333;left:465.79999999999995px;width:600px;text-align:right;transform:scaleX(0.9709);transform-origin:100% 0;">31 %</div>
<div class="t " style="top:489.71px;font-size:12.77px;line-height:15.33px;color:#333;left:594px;width:600px;text-align:right;transform:scaleX(0.9709);transform-origin:100% 0;">00:01:19</div>
<div class="t " style="top:489.71px;font-size:12.77px;line-height:15.33px;color:#333;left:682.2px;width:600px;text-align:right;transform:scaleX(0.9709);transform-origin:100% 0;">42 %</div>
<div class="t " style="top:489.71px;font-size:12.77px;line-height:15.33px;color:#333;left:820.5999999999999px;width:600px;text-align:right;transform:scaleX(0.9709);transform-origin:100% 0;">2,41s</div>
<div class="r" style="left:243px;top:554px;width:1198px;height:1px;background:#e8e8e8;"></div>
<svg style="left:264.0px;top:529.90px" width="13" height="13" viewBox="0 0 12 12"><rect x="0.6" y="0.6" width="10.8" height="10.8" rx="1.8" stroke="#b5b5b5" stroke-width="1.2" fill="none"/><path d="M2.1 5.9 H9.7" stroke="#999" stroke-width="1.1"/><path d="M5.9 2.1 V9.5" stroke="#999" stroke-width="1.1"/></svg>
<div class="t " style="top:527.01px;font-size:14.68px;line-height:17.61px;color:#212121;left:283.8px;transform:scaleX(0.9259);transform-origin:0 0;">bibliotek</div>
<div class="t " style="top:528.71px;font-size:12.77px;line-height:15.33px;color:#333;left:181.20000000000005px;width:600px;text-align:right;transform:scaleX(0.9709);transform-origin:100% 0;">50 707</div>
<div class="t " style="top:528.71px;font-size:12.77px;line-height:15.33px;color:#333;left:309.6px;width:600px;text-align:right;transform:scaleX(0.9709);transform-origin:100% 0;">41 484</div>
<div class="t " style="top:528.71px;font-size:12.77px;line-height:15.33px;color:#333;left:465.79999999999995px;width:600px;text-align:right;transform:scaleX(0.9709);transform-origin:100% 0;">56 %</div>
<div class="t " style="top:528.71px;font-size:12.77px;line-height:15.33px;color:#333;left:594px;width:600px;text-align:right;transform:scaleX(0.9709);transform-origin:100% 0;">00:01:38</div>
<div class="t " style="top:528.71px;font-size:12.77px;line-height:15.33px;color:#333;left:682.2px;width:600px;text-align:right;transform:scaleX(0.9709);transform-origin:100% 0;">70 %</div>
<div class="t " style="top:528.71px;font-size:12.77px;line-height:15.33px;color:#333;left:820.5999999999999px;width:600px;text-align:right;transform:scaleX(0.9709);transform-origin:100% 0;">0,82s</div>
<div class="r" style="left:243px;top:592px;width:1198px;height:1px;background:#e8e8e8;"></div>
<svg style="left:264.0px;top:567.90px" width="13" height="13" viewBox="0 0 12 12"><rect x="0.6" y="0.6" width="10.8" height="10.8" rx="1.8" stroke="#b5b5b5" stroke-width="1.2" fill="none"/><path d="M2.1 5.9 H9.7" stroke="#999" stroke-width="1.1"/><path d="M5.9 2.1 V9.5" stroke="#999" stroke-width="1.1"/></svg>
<div class="t " style="top:565.51px;font-size:14.15px;line-height:16.98px;color:#212121;left:283.8px;transform:scaleX(0.9259);transform-origin:0 0;">personal</div>
<div class="t " style="top:566.71px;font-size:12.77px;line-height:15.33px;color:#333;left:181.20000000000005px;width:600px;text-align:right;transform:scaleX(0.9709);transform-origin:100% 0;">21 897</div>
<div class="t " style="top:566.71px;font-size:12.77px;line-height:15.33px;color:#333;left:309.6px;width:600px;text-align:right;transform:scaleX(0.9709);transform-origin:100% 0;">19 506</div>
<div class="t " style="top:566.71px;font-size:12.77px;line-height:15.33px;color:#333;left:465.79999999999995px;width:600px;text-align:right;transform:scaleX(0.9709);transform-origin:100% 0;">67 %</div>
<div class="t " style="top:566.71px;font-size:12.77px;line-height:15.33px;color:#333;left:594px;width:600px;text-align:right;transform:scaleX(0.9709);transform-origin:100% 0;">00:01:19</div>
<div class="t " style="top:566.71px;font-size:12.77px;line-height:15.33px;color:#333;left:682.2px;width:600px;text-align:right;transform:scaleX(0.9709);transform-origin:100% 0;">57 %</div>
<div class="t " style="top:566.71px;font-size:12.77px;line-height:15.33px;color:#333;left:820.5999999999999px;width:600px;text-align:right;transform:scaleX(0.9709);transform-origin:100% 0;">1,23s</div>
<div class="r" style="left:243px;top:631px;width:1198px;height:1px;background:#e8e8e8;"></div>
<svg style="left:264.0px;top:605.90px" width="13" height="13" viewBox="0 0 12 12"><rect x="0.6" y="0.6" width="10.8" height="10.8" rx="1.8" stroke="#b5b5b5" stroke-width="1.2" fill="none"/><path d="M2.1 5.9 H9.7" stroke="#999" stroke-width="1.1"/><path d="M5.9 2.1 V9.5" stroke="#999" stroke-width="1.1"/></svg>
<div class="t " style="top:603.51px;font-size:14.15px;line-height:16.98px;color:#212121;left:283.8px;transform:scaleX(0.9259);transform-origin:0 0;">nyheter</div>
<div class="t " style="top:604.71px;font-size:12.77px;line-height:15.33px;color:#333;left:181.20000000000005px;width:600px;text-align:right;transform:scaleX(0.9709);transform-origin:100% 0;">16 245</div>
<div class="t " style="top:604.71px;font-size:12.77px;line-height:15.33px;color:#333;left:309.6px;width:600px;text-align:right;transform:scaleX(0.9709);transform-origin:100% 0;">14 809</div>
<div class="t " style="top:604.71px;font-size:12.77px;line-height:15.33px;color:#333;left:465.79999999999995px;width:600px;text-align:right;transform:scaleX(0.9709);transform-origin:100% 0;">85 %</div>
<div class="t " style="top:604.71px;font-size:12.77px;line-height:15.33px;color:#333;left:594px;width:600px;text-align:right;transform:scaleX(0.9709);transform-origin:100% 0;">00:00:50</div>
<div class="t " style="top:604.71px;font-size:12.77px;line-height:15.33px;color:#333;left:682.2px;width:600px;text-align:right;transform:scaleX(0.9709);transform-origin:100% 0;">81 %</div>
<div class="t " style="top:604.71px;font-size:12.77px;line-height:15.33px;color:#333;left:820.5999999999999px;width:600px;text-align:right;transform:scaleX(0.9709);transform-origin:100% 0;">1,31s</div>
<div class="r" style="left:243px;top:669px;width:1198px;height:1px;background:#e8e8e8;"></div>
<svg style="left:264.0px;top:644.90px" width="13" height="13" viewBox="0 0 12 12"><rect x="0.6" y="0.6" width="10.8" height="10.8" rx="1.8" stroke="#b5b5b5" stroke-width="1.2" fill="none"/><path d="M2.1 5.9 H9.7" stroke="#999" stroke-width="1.1"/><path d="M5.9 2.1 V9.5" stroke="#999" stroke-width="1.1"/></svg>
<div class="t " style="top:642.51px;font-size:14.15px;line-height:16.98px;color:#212121;left:283.8px;transform:scaleX(0.9259);transform-origin:0 0;">forskning</div>
<div class="t " style="top:643.71px;font-size:12.77px;line-height:15.33px;color:#333;left:181.20000000000005px;width:600px;text-align:right;transform:scaleX(0.9709);transform-origin:100% 0;">9 596</div>
<div class="t " style="top:643.71px;font-size:12.77px;line-height:15.33px;color:#333;left:309.6px;width:600px;text-align:right;transform:scaleX(0.9709);transform-origin:100% 0;">8 005</div>
<div class="t " style="top:643.71px;font-size:12.77px;line-height:15.33px;color:#333;left:465.79999999999995px;width:600px;text-align:right;transform:scaleX(0.9709);transform-origin:100% 0;">70 %</div>
<div class="t " style="top:643.71px;font-size:12.77px;line-height:15.33px;color:#333;left:594px;width:600px;text-align:right;transform:scaleX(0.9709);transform-origin:100% 0;">00:01:00</div>
<div class="t " style="top:643.71px;font-size:12.77px;line-height:15.33px;color:#333;left:682.2px;width:600px;text-align:right;transform:scaleX(0.9709);transform-origin:100% 0;">56 %</div>
<div class="t " style="top:643.71px;font-size:12.77px;line-height:15.33px;color:#333;left:820.5999999999999px;width:600px;text-align:right;transform:scaleX(0.9709);transform-origin:100% 0;">1,41s</div>
<div class="r" style="left:243px;top:707px;width:1198px;height:1px;background:#e8e8e8;"></div>
<svg style="left:264.0px;top:682.90px" width="13" height="13" viewBox="0 0 12 12"><rect x="0.6" y="0.6" width="10.8" height="10.8" rx="1.8" stroke="#b5b5b5" stroke-width="1.2" fill="none"/><path d="M2.1 5.9 H9.7" stroke="#999" stroke-width="1.1"/></svg>
<div class="t " style="top:680.37px;font-size:14.30px;line-height:17.16px;color:#212121;left:283.8px;transform:scaleX(0.9259);transform-origin:0 0;">idrottshogskolan</div>
<div class="t " style="top:681.71px;font-size:12.77px;line-height:15.33px;color:#333;left:181.20000000000005px;width:600px;text-align:right;transform:scaleX(0.9709);transform-origin:100% 0;">6 777</div>
<div class="t " style="top:681.71px;font-size:12.77px;line-height:15.33px;color:#333;left:309.6px;width:600px;text-align:right;transform:scaleX(0.9709);transform-origin:100% 0;">5 820</div>
<div class="t " style="top:681.71px;font-size:12.77px;line-height:15.33px;color:#333;left:465.79999999999995px;width:600px;text-align:right;transform:scaleX(0.9709);transform-origin:100% 0;">35 %</div>
<div class="t " style="top:681.71px;font-size:12.77px;line-height:15.33px;color:#333;left:594px;width:600px;text-align:right;transform:scaleX(0.9709);transform-origin:100% 0;">00:01:21</div>
<div class="t " style="top:681.71px;font-size:12.77px;line-height:15.33px;color:#333;left:682.2px;width:600px;text-align:right;transform:scaleX(0.9709);transform-origin:100% 0;">46 %</div>
<div class="t " style="top:681.71px;font-size:12.77px;line-height:15.33px;color:#333;left:820.5999999999999px;width:600px;text-align:right;transform:scaleX(0.9709);transform-origin:100% 0;">1,87s</div>
<div class="r" style="left:243px;top:745px;width:1198px;height:1px;background:#e8e8e8;"></div>
<svg style="left:276.5px;top:720.90px" width="13" height="13" viewBox="0 0 12 12"><rect x="0.6" y="0.6" width="10.8" height="10.8" rx="1.8" stroke="#b5b5b5" stroke-width="1.2" fill="none"/><path d="M2.1 5.9 H9.7" stroke="#999" stroke-width="1.1"/></svg>
<div class="t " style="top:718.81px;font-size:13.82px;line-height:16.59px;color:#212121;left:296.3px;transform:scaleX(0.9259);transform-origin:0 0;">halsa-pa-campus</div>
<div class="t " style="top:719.71px;font-size:12.77px;line-height:15.33px;color:#333;left:181.20000000000005px;width:600px;text-align:right;transform:scaleX(0.9709);transform-origin:100% 0;">6 233</div>
<div class="t " style="top:719.71px;font-size:12.77px;line-height:15.33px;color:#333;left:309.6px;width:600px;text-align:right;transform:scaleX(0.9709);transform-origin:100% 0;">5 331</div>
<div class="t " style="top:719.71px;font-size:12.77px;line-height:15.33px;color:#333;left:465.79999999999995px;width:600px;text-align:right;transform:scaleX(0.9709);transform-origin:100% 0;">34 %</div>
<div class="t " style="top:719.71px;font-size:12.77px;line-height:15.33px;color:#333;left:594px;width:600px;text-align:right;transform:scaleX(0.9709);transform-origin:100% 0;">00:01:23</div>
<div class="t " style="top:719.71px;font-size:12.77px;line-height:15.33px;color:#333;left:682.2px;width:600px;text-align:right;transform:scaleX(0.9709);transform-origin:100% 0;">47 %</div>
<div class="t " style="top:719.71px;font-size:12.77px;line-height:15.33px;color:#333;left:820.5999999999999px;width:600px;text-align:right;transform:scaleX(0.9709);transform-origin:100% 0;">1,85s</div>
<div class="r" style="left:243px;top:784px;width:1198px;height:1px;background:#e8e8e8;"></div>
<svg style="left:289.3px;top:758.10px" width="14" height="13" viewBox="0 0 14 13"><path d="M6 2.5 H2.8 Q1 2.5 1 4.3 V10.2 Q1 12 2.8 12 H8.7 Q10.5 12 10.5 10.2 V7.5" stroke="#b0b0b0" stroke-width="1.5" fill="none"/><path d="M5.5 7.5 L12 1" stroke="#b0b0b0" stroke-width="1.6"/><path d="M8 0.6 H12.6 V5.2 Z" fill="#b0b0b0"/></svg>
<div class="t " style="top:756.51px;font-size:14.15px;line-height:16.98px;color:#3a6594;left:308.5px;transform:scaleX(0.9259);transform-origin:0 0;">/index</div>
<div class="t " style="top:757.71px;font-size:12.77px;line-height:15.33px;color:#333;left:181.20000000000005px;width:600px;text-align:right;transform:scaleX(0.9709);transform-origin:100% 0;">2 337</div>
<div class="t " style="top:757.71px;font-size:12.77px;line-height:15.33px;color:#333;left:309.6px;width:600px;text-align:right;transform:scaleX(0.9709);transform-origin:100% 0;">2 021</div>
<div class="t " style="top:757.71px;font-size:12.77px;line-height:15.33px;color:#333;left:465.79999999999995px;width:600px;text-align:right;transform:scaleX(0.9709);transform-origin:100% 0;">15 %</div>
<div class="t " style="top:757.71px;font-size:12.77px;line-height:15.33px;color:#333;left:594px;width:600px;text-align:right;transform:scaleX(0.9709);transform-origin:100% 0;">00:00:49</div>
<div class="t " style="top:757.71px;font-size:12.77px;line-height:15.33px;color:#333;left:682.2px;width:600px;text-align:right;transform:scaleX(0.9709);transform-origin:100% 0;">28 %</div>
<div class="t " style="top:757.71px;font-size:12.77px;line-height:15.33px;color:#333;left:820.5999999999999px;width:600px;text-align:right;transform:scaleX(0.9709);transform-origin:100% 0;">3,19s</div>
<div class="r" style="left:243px;top:822px;width:1198px;height:1px;background:#e8e8e8;"></div>
<svg style="left:289.0px;top:797.90px" width="13" height="13" viewBox="0 0 12 12"><rect x="0.6" y="0.6" width="10.8" height="10.8" rx="1.8" stroke="#b5b5b5" stroke-width="1.2" fill="none"/><path d="M2.1 5.9 H9.7" stroke="#999" stroke-width="1.1"/></svg>
<div class="t " style="top:795.51px;font-size:14.15px;line-height:16.98px;color:#212121;left:308.8px;transform:scaleX(0.9259);transform-origin:0 0;">halsa-pa-campus---forelasningar</div>
<div class="t " style="top:796.71px;font-size:12.77px;line-height:15.33px;color:#333;left:181.20000000000005px;width:600px;text-align:right;transform:scaleX(0.9709);transform-origin:100% 0;">1 651</div>
<div class="t " style="top:796.71px;font-size:12.77px;line-height:15.33px;color:#333;left:309.6px;width:600px;text-align:right;transform:scaleX(0.9709);transform-origin:100% 0;">1 384</div>
<div class="t " style="top:796.71px;font-size:12.77px;line-height:15.33px;color:#333;left:465.79999999999995px;width:600px;text-align:right;transform:scaleX(0.9709);transform-origin:100% 0;">61 %</div>
<div class="t " style="top:796.71px;font-size:12.77px;line-height:15.33px;color:#333;left:594px;width:600px;text-align:right;transform:scaleX(0.9709);transform-origin:100% 0;">00:01:53</div>
<div class="t " style="top:796.71px;font-size:12.77px;line-height:15.33px;color:#333;left:682.2px;width:600px;text-align:right;transform:scaleX(0.9709);transform-origin:100% 0;">72 %</div>
<div class="t " style="top:796.71px;font-size:12.77px;line-height:15.33px;color:#333;left:820.5999999999999px;width:600px;text-align:right;transform:scaleX(0.9709);transform-origin:100% 0;">2,59s</div>
<div class="r" style="left:243px;top:860px;width:1198px;height:1px;background:#e8e8e8;"></div>
<svg style="left:302px;top:835.10px" width="14" height="13" viewBox="0 0 14 13"><path d="M6 2.5 H2.8 Q1 2.5 1 4.3 V10.2 Q1 12 2.8 12 H8.7 Q10.5 12 10.5 10.2 V7.5" stroke="#b0b0b0" stroke-width="1.5" fill="none"/><path d="M5.5 7.5 L12 1" stroke="#b0b0b0" stroke-width="1.6"/><path d="M8 0.6 H12.6 V5.2 Z" fill="#b0b0b0"/></svg>
<div class="t " style="top:833.51px;font-size:14.15px;line-height:16.98px;color:#3a6594;left:321.2px;transform:scaleX(0.9259);transform-origin:0 0;">/index</div>
<div class="t " style="top:834.71px;font-size:12.77px;line-height:15.33px;color:#333;left:181.20000000000005px;width:600px;text-align:right;transform:scaleX(0.9709);transform-origin:100% 0;">1 651</div>
<div class="t " style="top:834.71px;font-size:12.77px;line-height:15.33px;color:#333;left:309.6px;width:600px;text-align:right;transform:scaleX(0.9709);transform-origin:100% 0;">1 384</div>
<div class="t " style="top:834.71px;font-size:12.77px;line-height:15.33px;color:#333;left:465.79999999999995px;width:600px;text-align:right;transform:scaleX(0.9709);transform-origin:100% 0;">61 %</div>
<div class="t " style="top:834.71px;font-size:12.77px;line-height:15.33px;color:#333;left:594px;width:600px;text-align:right;transform:scaleX(0.9709);transform-origin:100% 0;">00:01:53</div>
<div class="t " style="top:834.71px;font-size:12.77px;line-height:15.33px;color:#333;left:682.2px;width:600px;text-align:right;transform:scaleX(0.9709);transform-origin:100% 0;">72 %</div>
<div class="t " style="top:834.71px;font-size:12.77px;line-height:15.33px;color:#333;left:820.5999999999999px;width:600px;text-align:right;transform:scaleX(0.9709);transform-origin:100% 0;">2,59s</div>
<div class="r" style="left:243px;top:899px;width:1198px;height:1px;background:#e8e8e8;"></div>
<svg style="left:289.0px;top:873.90px" width="13" height="13" viewBox="0 0 12 12"><rect x="0.6" y="0.6" width="10.8" height="10.8" rx="1.8" stroke="#b5b5b5" stroke-width="1.2" fill="none"/><path d="M2.1 5.9 H9.7" stroke="#999" stroke-width="1.1"/><path d="M5.9 2.1 V9.5" stroke="#999" stroke-width="1.1"/></svg>
<div class="t " style="top:871.37px;font-size:14.29px;line-height:17.15px;color:#212121;left:308.8px;transform:scaleX(0.9259);transform-origin:0 0;">halsa-pa-campus---aktiviteter-utan-foranmalan</div>
<div class="t " style="top:872.71px;font-size:12.77px;line-height:15.33px;color:#333;left:181.20000000000005px;width:600px;text-align:right;transform:scaleX(0.9709);transform-origin:100% 0;">1 216</div>
<div class="t " style="top:872.71px;font-size:12.77px;line-height:15.33px;color:#333;left:309.6px;width:600px;text-align:right;transform:scaleX(0.9709);transform-origin:100% 0;">1 045</div>
<div class="t " style="top:872.71px;font-size:12.77px;line-height:15.33px;color:#333;left:465.79999999999995px;width:600px;text-align:right;transform:scaleX(0.9709);transform-origin:100% 0;">65 %</div>
<div class="t " style="top:872.71px;font-size:12.77px;line-height:15.33px;color:#333;left:594px;width:600px;text-align:right;transform:scaleX(0.9709);transform-origin:100% 0;">00:01:28</div>
<div class="t " style="top:872.71px;font-size:12.77px;line-height:15.33px;color:#333;left:682.2px;width:600px;text-align:right;transform:scaleX(0.9709);transform-origin:100% 0;">44 %</div>
<div class="t " style="top:872.71px;font-size:12.77px;line-height:15.33px;color:#333;left:820.5999999999999px;width:600px;text-align:right;transform:scaleX(0.9709);transform-origin:100% 0;">0,45s</div>
<div class="r" style="left:243px;top:937px;width:1198px;height:1px;background:#e8e8e8;"></div>
<svg style="left:289.0px;top:912.90px" width="13" height="13" viewBox="0 0 12 12"><rect x="0.6" y="0.6" width="10.8" height="10.8" rx="1.8" stroke="#b5b5b5" stroke-width="1.2" fill="none"/><path d="M2.1 5.9 H9.7" stroke="#999" stroke-width="1.1"/><path d="M5.9 2.1 V9.5" stroke="#999" stroke-width="1.1"/></svg>
<div class="t " style="top:910.37px;font-size:14.29px;line-height:17.15px;color:#212121;left:308.8px;transform:scaleX(0.9259);transform-origin:0 0;">halsa-pa-campus---aktiviteter-med-foranmalan</div>
<div class="t " style="top:911.71px;font-size:12.77px;line-height:15.33px;color:#333;left:181.20000000000005px;width:600px;text-align:right;transform:scaleX(0.9709);transform-origin:100% 0;">907</div>
<div class="t " style="top:911.71px;font-size:12.77px;line-height:15.33px;color:#333;left:309.6px;width:600px;text-align:right;transform:scaleX(0.9709);transform-origin:100% 0;">776</div>
<div class="t " style="top:911.71px;font-size:12.77px;line-height:15.33px;color:#333;left:465.79999999999995px;width:600px;text-align:right;transform:scaleX(0.9709);transform-origin:100% 0;">52 %</div>
<div class="t " style="top:911.71px;font-size:12.77px;line-height:15.33px;color:#333;left:594px;width:600px;text-align:right;transform:scaleX(0.9709);transform-origin:100% 0;">00:01:44</div>
<div class="t " style="top:911.71px;font-size:12.77px;line-height:15.33px;color:#333;left:682.2px;width:600px;text-align:right;transform:scaleX(0.9709);transform-origin:100% 0;">57 %</div>
<div class="t " style="top:911.71px;font-size:12.77px;line-height:15.33px;color:#333;left:820.5999999999999px;width:600px;text-align:right;transform:scaleX(0.9709);transform-origin:100% 0;">0,73s</div>
<svg style="left:0;top:0" width="1503" height="948"><g stroke="#7d8fb5" fill="none"><path d="M557 762.6 H560.3 L567.8 770.8 H572.5 M557 770.8 H560.3 L567.8 762.6 H572.5" stroke-width="1.9"/><path d="M582.9 772.6 V759.1 H595.9 V770 H585.6 Z" stroke-width="1.7" stroke-linejoin="round"/><path d="M606 757.6 H619.2 M606 774.9 H619.2" stroke-width="1.3"/><circle cx="635.6" cy="766.2" r="8.3" stroke-width="1.8"/><path d="M635.6 763.5 V774.5" stroke-width="1.6"/><path d="M631 760.5 L631.7 761.5 M640.2 760.5 L639.5 761.5 M635.6 759 V760.2 M628.8 764 L630 764.5 M642.4 764 L641.2 764.5" stroke-width="1"/><path d="M650.6 769.6 L655 764.2 L659.5 767.6 L666.5 762.2" stroke-width="1.5"/></g><path d="M571 759.2 L575.2 762.6 L571 766 Z M571 767.4 L575.2 770.8 L571 774.2 Z" fill="#7d8fb5"/><rect x="605.6" y="760.3" width="14" height="11.8" fill="#7d8fb5"/><circle cx="612.6" cy="764.2" r="2" fill="#fff"/><path d="M608.4 770.6 Q612.6 765.6 616.8 770.6 Z" fill="#fff"/><circle cx="650.6" cy="769.6" r="1" fill="#7d8fb5"/><circle cx="655" cy="764.2" r="1" fill="#7d8fb5"/><circle cx="659.5" cy="767.6" r="1" fill="#7d8fb5"/><circle cx="666.5" cy="762.2" r="1" fill="#7d8fb5"/></svg>
<svg style="left:0;top:0" width="1503" height="948"><g opacity="0.44"><polygon points="258.50,186.00 408.50,192.50 409.00,199.90 258.50,193.50" fill="rgb(243,198,0)" stroke="rgb(243,198,0)" stroke-width="5.0" stroke-linejoin="round"/></g></svg>
<svg style="left:0;top:0" width="1503" height="948"><g opacity="0.44"><polygon points="455.00,186.50 659.50,192.50 659.50,198.20 455.00,193.50" fill="rgb(243,198,0)" stroke="rgb(243,198,0)" stroke-width="5.0" stroke-linejoin="round"/></g></svg>
<svg style="left:0;top:0" width="1503" height="948"><g opacity="0.44"><polygon points="708.00,186.50 781.50,186.50 781.50,193.50 708.00,193.50" fill="rgb(243,198,0)" stroke="rgb(243,198,0)" stroke-width="5.0" stroke-linejoin="round"/></g></svg>
<svg style="left:0;top:0" width="1503" height="948"><g opacity="0.44"><polygon points="45.60,362.30 112.60,363.00 112.60,370.90 45.60,369.80" fill="rgb(243,198,0)" stroke="rgb(243,198,0)" stroke-width="5.0" stroke-linejoin="round"/></g></svg>
<svg style="left:0;top:0" width="1503" height="948"><g opacity="0.44"><polygon points="37.10,406.20 99.40,404.40 99.40,411.40 37.10,413.10" fill="rgb(243,198,0)" stroke="rgb(243,198,0)" stroke-width="5.0" stroke-linejoin="round"/></g></svg>
<svg style="left:0;top:0" width="1503" height="948"><g opacity="0.44"><polygon points="539.30,761.50 687.00,763.80 687.00,771.50 539.30,769.00" fill="rgb(243,198,0)" stroke="rgb(243,198,0)" stroke-width="5.0" stroke-linejoin="round"/></g></svg>
<svg style="left:0;top:0" width="1503" height="948"><path d="M232.8 169 Q238 165 244 164.8 Q249 165 248.7 171 Q248 175 244 178.5 L240.2 182.5 Q239.8 183.3 241.5 183.3 L254.5 183.3" stroke="#1170cf" stroke-width="3.5" fill="none" stroke-linecap="round" stroke-linejoin="round"/></svg>
<svg style="left:0;top:0" width="1503" height="948"><path d="M442.5 163.5 Q447 159.5 453 158.8 Q456 159.5 454 162.5 L447.1 168.5 Q455 168.5 456 173.5 Q456.5 179 450 180.3 Q445 180.8 441.7 178.2" stroke="#1170cf" stroke-width="3.3" fill="none" stroke-linecap="round" stroke-linejoin="round"/></svg>
<svg style="left:0;top:0" width="1503" height="948"><path d="M691.2 158.6 Q690 163 690.3 165 Q691 167 694 167 L701 165.8 M699.5 163.5 L699.2 177.2" stroke="#1170cf" stroke-width="3.5" fill="none" stroke-linecap="round" stroke-linejoin="round"/></svg>
<svg style="left:0;top:0" width="1503" height="948"><path d="M161.5 369 L146.5 368.8 Q146 375 146.9 380.5 L153 380.5 Q158.5 381.5 159.5 388 Q159.8 393 155 394.2 L146.2 395" stroke="#1170cf" stroke-width="3.3" fill="none" stroke-linecap="round" stroke-linejoin="round"/></svg>
<svg style="left:0;top:0" width="1503" height="948"><path d="M352.8 267.6 Q347 268.5 344.5 271 Q342.5 274 342.8 278 Q343.5 282.5 347.5 283.3 Q353 284.5 355 282 Q356 279 352 277.8 Q347 276.5 343.3 278.5" stroke="#1170cf" stroke-width="3.3" fill="none" stroke-linecap="round" stroke-linejoin="round"/></svg>
<svg style="left:0;top:0" width="1503" height="948"><path d="M492.4 757.3 L504 756.8 Q505.8 757 505.3 759.5 L500.8 777 M496.8 767.6 L507.3 766.2" stroke="#1170cf" stroke-width="3.4" fill="none" stroke-linecap="round" stroke-linejoin="round"/></svg>
</body></html>
